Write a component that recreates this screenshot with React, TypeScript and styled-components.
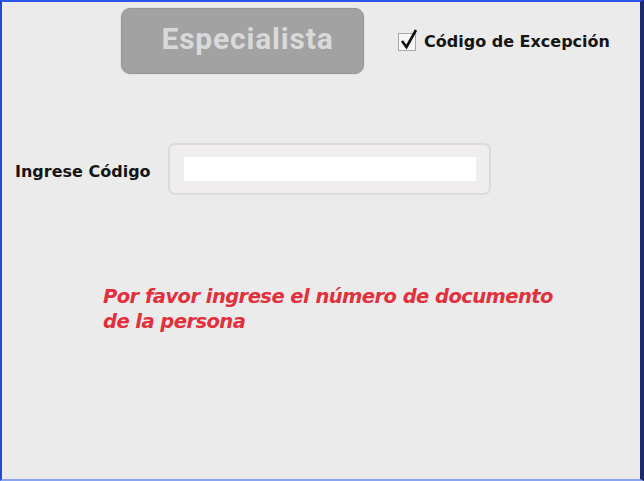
import React from "react";
import styled, { createGlobalStyle } from "styled-components";

const Global = createGlobalStyle`
  html, body { margin: 0; padding: 0; background: #ebebeb; }
  * { box-sizing: border-box; }
`;

const Frame = styled.div`
  width: 644px;
  height: 481px;
  background: #ebebeb;
  border-top: 2px solid #2a55e6;
  border-left: 2px solid #2448d8;
  border-right: 4px solid #1c2a6a;
  border-bottom: 2px solid #8aa4f2;
  display: flex;
  flex-direction: column;
`;

const TopRow = styled.div`
  display: flex;
  align-items: center;
  padding: 6px 0 0 119px;
`;

const BigButton = styled.button`
  width: 243px;
  height: 66px;
  border-radius: 9px;
  border: 1px solid #969696;
  background: #a2a2a2;
  box-shadow: 0 0 0 1px #e2e2e2;
  color: #d9d9d9;
  font-family: Roboto, "Liberation Sans", sans-serif;
  font-weight: 700;
  font-size: 30px;
  letter-spacing: 0.8px;
  padding: 0 0 5px 10px;
  cursor: default;
`;

const CheckLabel = styled.label`
  display: flex;
  align-items: center;
  margin-left: 34px;
  font-family: "DejaVu Sans", Verdana, sans-serif;
  font-weight: bold;
  font-size: 16px;
  color: #151515;
`;

const Box = styled.span`
  position: relative;
  width: 18px;
  height: 18px;
  border: 1px solid #a8a8a8;
  background: #f6f6f6;
  margin-right: 8px;
  margin-top: 2px;
`;

const Tick = styled.svg`
  position: absolute;
  left: 1px;
  top: -6px;
`;

const InputRow = styled.div`
  display: flex;
  align-items: center;
  margin-top: 69px;
  padding-left: 13px;
`;

const FieldLabel = styled.span`
  width: 153px;
  margin-top: 4px;
  font-family: "DejaVu Sans", Verdana, sans-serif;
  font-weight: bold;
  font-size: 16px;
  color: #151515;
`;

const FieldFrame = styled.div`
  width: 323px;
  height: 52px;
  border: 2px solid #dcdada;
  border-radius: 7px;
  background: #efeded;
  display: flex;
  align-items: center;
  padding-left: 14px;
`;

const FieldInput = styled.input`
  width: 292px;
  height: 24px;
  border: none;
  outline: none;
  background: #ffffff;
`;

const Message = styled.p`
  margin: 89px 0 0 101px;
  width: 500px;
  font-family: "DejaVu Sans", Verdana, sans-serif;
  font-style: italic;
  font-weight: bold;
  font-size: 19.5px;
  line-height: 25px;
  letter-spacing: -0.55px;
  color: #e2303c;
`;

export default function App() {
  return (
    <>
      <Global />
      <Frame>
        <TopRow>
          <BigButton disabled>Especialista</BigButton>
          <CheckLabel>
            <Box>
              <Tick width="20" height="22" viewBox="0 0 20 22">
                <path d="M2 13 L6.5 19 L16 2" fill="none" stroke="#101010" strokeWidth="2.6" strokeLinejoin="miter" />
              </Tick>
            </Box>
            Código de Excepción
          </CheckLabel>
        </TopRow>
        <InputRow>
          <FieldLabel>Ingrese Código</FieldLabel>
          <FieldFrame>
            <FieldInput />
          </FieldFrame>
        </InputRow>
        <Message>
          Por favor ingrese el número de documento
          <br />
          de la persona
        </Message>
      </Frame>
    </>
  );
}
